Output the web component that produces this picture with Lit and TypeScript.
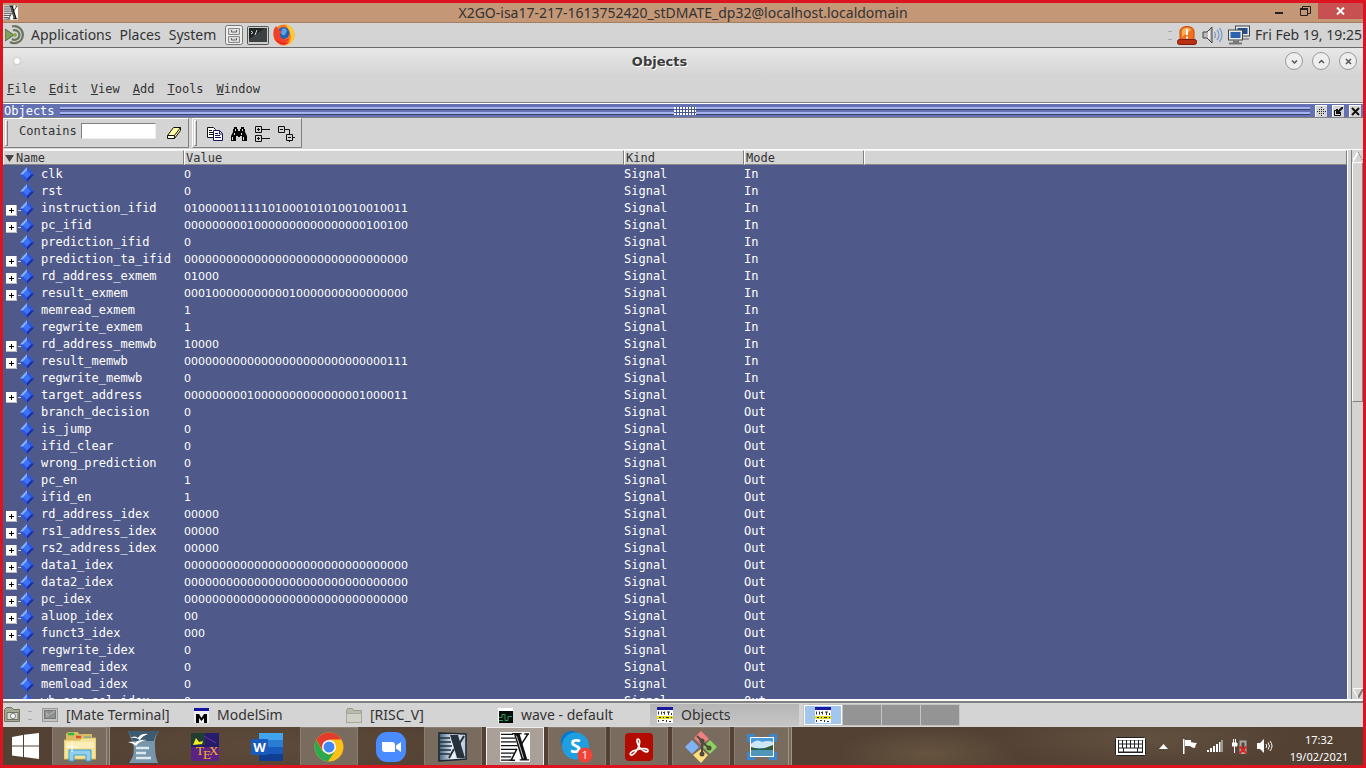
import { LitElement, html, css, svg, TemplateResult } from "lit";
import { customElement, state } from "lit/decorators.js";

type Row = [name: string, value: string, mode: string, expandable?: boolean];

const ROWS: Row[] = [
  ["clk", "0", "In"],
  ["rst", "0", "In"],
  ["instruction_ifid", "01000001111101000101010010010011", "In", true],
  ["pc_ifid", "00000000010000000000000000100100", "In", true],
  ["prediction_ifid", "0", "In"],
  ["prediction_ta_ifid", "00000000000000000000000000000000", "In", true],
  ["rd_address_exmem", "01000", "In", true],
  ["result_exmem", "00010000000000010000000000000000", "In", true],
  ["memread_exmem", "1", "In"],
  ["regwrite_exmem", "1", "In"],
  ["rd_address_memwb", "10000", "In", true],
  ["result_memwb", "00000000000000000000000000000111", "In", true],
  ["regwrite_memwb", "0", "In"],
  ["target_address", "00000000010000000000000001000011", "Out", true],
  ["branch_decision", "0", "Out"],
  ["is_jump", "0", "Out"],
  ["ifid_clear", "0", "Out"],
  ["wrong_prediction", "0", "Out"],
  ["pc_en", "1", "Out"],
  ["ifid_en", "1", "Out"],
  ["rd_address_idex", "00000", "Out", true],
  ["rs1_address_idex", "00000", "Out", true],
  ["rs2_address_idex", "00000", "Out", true],
  ["data1_idex", "00000000000000000000000000000000", "Out", true],
  ["data2_idex", "00000000000000000000000000000000", "Out", true],
  ["pc_idex", "00000000000000000000000000000000", "Out", true],
  ["aluop_idex", "00", "Out", true],
  ["funct3_idex", "000", "Out", true],
  ["regwrite_idex", "0", "Out"],
  ["memread_idex", "0", "Out"],
  ["memload_idex", "0", "Out"],
  ["wb_src_sel_idex", "0", "Out"],
];

const icon = (w: number, h: number, box: string, body: unknown): TemplateResult =>
  html`<svg width=${w} height=${h} viewBox=${box} aria-hidden="true">${body}</svg>`;

/* ---- window and panel icons ---- */
const xMark = (w: number, h: number) => icon(w, h, "0 0 32 32", svg`
  <rect width="32" height="32" fill="#fff"/>
  <path d="M1 2.500H14M1 6.500H16M1 10.500H17M1 14.500H19M1 18.500H18M1 22.500H15M1 26.500H12M1 30H11" stroke="#111" stroke-width="1.500"/>
  <path d="M13 1h10v1.500h-2L29 29h2v1.500H21V29h2L15 2.500h-2z" fill="#111"/>
  <path d="M30 2L21.500 15M18 18L12 30M26 2h5M10 30h6" fill="none" stroke="#111" stroke-width="1.600"/>
  <path d="M17.500 4l7.500 24" stroke="#fff" stroke-width=".8"/>`);

const mateLogo = icon(20, 20, "0 0 20 20", svg`
  <path d="M0 4l9 6-9 6z" fill="#7f9f5a" stroke="#56683f"/>
  <path d="M7 1.500a8.500 8.500 0 1 1-2 15.500M8 5.500a4.800 4.800 0 1 1-1 8.500" fill="none" stroke="#68755c" stroke-width="2.200"/>
  <circle cx="10" cy="10" r="2" fill="#87a752"/>`);

const cabinet = icon(18, 20, "0 0 18 20", svg`
  <rect x=".5" y=".5" width="17" height="19" rx="2" fill="#eee" stroke="#777"/>
  <path d="M3.500 3.500h11v6h-11zM3.500 11.500h11v6h-11z" fill="#ddd" stroke="#888"/>
  <path d="M6.500 5v2h5V5M6.500 13v2h5v-2" fill="none" stroke="#666"/>`);

const terminal = icon(22, 19, "0 0 22 19", svg`
  <rect x=".5" y=".5" width="21" height="18" rx="1" fill="#ccc" stroke="#555"/>
  <rect x="2" y="2" width="18" height="14" fill="#1f2425"/>
  <path d="M2 13L18 2h2v14H2z" fill="#3c4243"/>
  <path d="M4 5l2 1.500L4 8M10 4L8 9" fill="none" stroke="#ddd"/>`);

const firefox = icon(22, 22, "0 0 22 22", svg`
  <circle cx="11" cy="11" r="10.500" fill="#ff7a18"/>
  <path d="M13 0c5 2 9 6 8.500 12-1 6-5 9.500-10.500 9.500 7-2 8-9 6-13C16 5 14 4 13 0z" fill="#ffcb2e"/>
  <circle cx="10.500" cy="9" r="6" fill="#245fb4"/>
  <path d="M1 5l2-3 2 3 3 2c1 1 0 2-1 3 0 5 5 7 9 4 0 5-10 8-14 2-2-4-2-7-1-11z" fill="#f0402a"/>
  <path d="M2 12c1 6 9 9 15 5-4 6-13 5-15-5z" fill="#e8222c"/>
  <path d="M9 5q4-2 5 2l-2 4q-3 1-4-2z" fill="#5aa4e4"/>`);

const siren = icon(20, 20, "0 0 20 20", svg`
  <path d="M3 15V6c0-6 14-6 14 0v9z" fill="#f0701c" stroke="#c84c14"/>
  <path d="M5 12V6c1-4 8-4 9-1" fill="#ffb055"/>
  <rect x=".5" y="14.500" width="19" height="5" rx="2" fill="#b92f16" stroke="#7d1c0b"/>
  <path d="M10 4v6M10 11.500v2" stroke="#fff" stroke-width="2"/>`);

const speaker = icon(21, 20, "0 0 21 20", svg`
  <path d="M1 7h4l5-5v16l-5-5H1z" fill="#bbb" stroke="#444"/>
  <path d="M7 6v8" stroke="#eee" stroke-width="2"/>
  <path d="M12.500 7q2 3 0 6M15 5q4 5 0 10M17.500 3q5 7 0 14" fill="none" stroke="#7e9cc8" stroke-width="1.300"/>`);

const network = icon(22, 20, "0 0 22 20", svg`
  <rect x="7.500" y="1" width="14" height="10" fill="#e9e9e9" stroke="#444"/><rect x="9.500" y="3" width="10" height="6" fill="#234f8f"/>
  <path d="M13 14h8" stroke="#999" stroke-width="2"/>
  <rect x=".5" y="5" width="14" height="10" fill="#e9e9e9" stroke="#444"/><rect x="2.500" y="7" width="10" height="6" fill="#2b62ad"/>
  <path d="M6 15v2h4v-2M1 18.500h13" fill="none" stroke="#777" stroke-width="2"/>`);

/* ---- toolbar icons ---- */
const eraser = icon(16, 14, "0 0 16 14", svg`
  <path d="M1.500 9.500l6-8h7v3l-6 8h-7z" fill="#ffffa8" stroke="#111"/>
  <path d="M1.500 9.500h7l6-8M8.500 9.500v3" fill="none" stroke="#111"/><path d="M3 11h4" stroke="#fff" stroke-width="2"/>`);

const copy = icon(16, 14, "0 0 16 14", svg`
  <path d="M.5.500h6l2 2v8h-8z" fill="#fff" stroke="#111"/><path d="M2 3.500h3M2 5.500h5M2 7.500h5" stroke="#111"/>
  <path d="M6.500 3.500h6l3 3v7h-9z" fill="#fff" stroke="#16165f"/><path d="M8 6.500h3M8 8.500h5M8 10.500h6M12.500 4v3h3" fill="none" stroke="#16165f"/>`);

const binoculars = icon(16, 14, "0 0 16 14", svg`
  <path d="M3 0h3v2h1v2h2V2h1V0h3v2h1v3l2 4v5h-5V9H9v1H7V9H5v5H0V9l2-4V2h1z" fill="#050505"/>
  <path d="M4.500 2v2M11.500 2v2M3.500 6v2M10.500 6v2M1.500 10v3M12.500 10v3" stroke="#ddd"/>`);

const expandAll = icon(15, 16, "0 0 15 16", svg`
  <path d="M.5.500h6v6h-6zM.5 9.500h6v6h-6zM7 3.500h8M7 12.500h8M2 3.500h3M3.500 2v3M2 12.500h3M3.500 11v3" fill="none" stroke="#111"/>`);

const collapseTree = icon(17, 16, "0 0 17 16", svg`
  <path d="M.5.500h6v6h-6zM8.500 8.500h6v6h-6zM2 3.500h3M7 3.500h4.500v5M10 11.500h3M15 11.500h2M11.500 15v1" fill="none" stroke="#111"/>`);

const diamond = icon(14, 15, "0 0 14 15", svg`
  <path d="M7 0l7 7.500L7 15 0 7.500z" fill="#2b55df"/><path d="M7 0v7.500H0z" fill="#86b1f5"/>
  <path d="M7 3l4 4.500-4 4-4-4z" fill="#3d73f5"/><path d="M14 7.500L7 15v-3l4-4.500z" fill="#1c2f9c"/>`);

const plus = icon(11, 11, "0 0 11 11", svg`
  <rect width="11" height="11" fill="#fff"/><path d="M0 10.500h10.500V0" fill="none" stroke="#bbb"/>
  <path d="M3 5.500h5M5.500 3v5" stroke="#000"/>`);

/* ---- session panel icons ---- */
const desk = icon(17, 16, "0 0 17 16", svg`
  <path d="M.5 2.500l2-2h5l2 2h6v12h-15z" fill="#a4a894" stroke="#6e7262"/><path d="M3 5.500h11v7H3z" fill="#d8dbcc" stroke="#6e7262"/><circle cx="9" cy="9" r="2.500" fill="#fff" stroke="#777"/>`);
const smallTerm = icon(16, 14, "0 0 16 14", svg`
  <rect x=".5" y=".5" width="15" height="13" fill="#c4c4c4" stroke="#999"/><rect x="2.500" y="2.500" width="11" height="8" fill="#8e9191" stroke="#777"/><path d="M4 5l2 1-2 1M4 9l9-6" fill="none" stroke="#b7b7b7"/>`);
const modelsim = icon(15, 15, "0 0 15 15", svg`
  <rect width="15" height="15" fill="#eee"/><path d="M0 1.500h15" stroke="#1414a0" stroke-width="3"/><path d="M2 15V6h3l2.500 4L10 6h3v9h-3v-5l-2.500 3L5 10v5z" fill="#000"/>`);
const folder = icon(16, 15, "0 0 16 15", svg`
  <path d="M.5 3l1-2.500h5l1 2H15.500v12H.5z" fill="#b9bbb0" stroke="#989a90"/><path d="M.5 5.500h15v9H.5z" fill="#cfd1c6" stroke="#a6a89e"/>`);
const wave = icon(15, 15, "0 0 15 15", svg`
  <rect width="15" height="15" fill="#fff"/><rect x="1" y="3" width="14" height="12" fill="#050d0a"/><path d="M1 9.500h3v-3h3v6h3v-4h4M1 12.500h4" fill="none" stroke="#2f9c62"/>`);
const objectsIcon = icon(16, 16, "0 0 16 16", svg`
  <rect width="16" height="16" fill="#fff"/><path d="M0 1.500h16" stroke="#1a1aa0" stroke-width="3"/>
  <path d="M0 9h16v3H0z" fill="#e4e020"/>
  <path d="M1.500 4.500v3M4.500 4.500v3M7.500 4.500v3M6 5.500h1M10 5h3M11.500 5v3M14.500 6v2M2 10.500h2M6 10.500h1M9 10.500h3M14 10.500h1M1.500 13v2M5 13.500h2M9.500 13v2M12 14.500h2" fill="none" stroke="#333"/>`);

/* ---- host taskbar icons ---- */
const winLogo = icon(27, 26, "0 0 27 26", svg`<path d="M0 4l11-2v10.500H0zM12 1.800L27 0v12.500H12zM0 13.500h11V24L0 22.500zM12 13.500h15V26l-15-2z" fill="#fff"/>`);
const explorer = icon(32, 30, "0 0 32 30", svg`
  <path d="M2 2l2-2h10l1 2h13v22H2z" fill="#d8bd63"/><path d="M4 2h6" stroke="#2fb344" stroke-width="2.500"/><path d="M12 5h5" stroke="#e1482b" stroke-width="2.500"/><path d="M20 6h7" stroke="#2e8fe0" stroke-width="2.500"/>
  <path d="M0 8h16l2-2h14v21H0z" fill="#f6e39a" stroke="#d8ba58"/><path d="M2 10h28v6H2z" fill="#fbeeb8"/>
  <path d="M5 29V18h22v11h-5v-6H10v6z" fill="#8fd0ee" stroke="#3f9bcc"/><path d="M8 9v11M2.500 15h11" stroke="#fff"/>`);
const office = icon(32, 32, "0 0 32 32", svg`
  <path d="M1 0h31q-5 6-4 16 0 9 3 16H2q7-9 4-20z" fill="#7896ab"/><path d="M1 0h31q-5 6-5 10H6z" fill="#3c5a70"/>
  <path d="M3 7q5-3 8 0 3-5 10-4-6 2-8 6-4-3-10-2zM1 11q5-1 7 1 4-4 12-3-8 1-11 6-3-3-8-4z" fill="#fff"/>
  <path d="M9 17h13M9 22h10M9 27h15" stroke="#dce7ee" stroke-width="2.500"/>`);
const tex = icon(28, 28, "0 0 28 28", svg`
  <rect width="28" height="28" fill="#271c6b"/><path d="M0 14h28v14H0z" fill="#5a2384"/><path d="M0 0h14v12H0z" fill="#213d33"/><path d="M5 5l3 4 4-1-1 3-9 1z" fill="#f2ee28"/><path d="M13 3l12 7" stroke="#6a34a4"/>
  <text x="5" y="22" font-size="13" font-family="Liberation Serif, serif" fill="#f4b623">T</text><text x="12" y="26" font-size="13" font-family="Liberation Serif, serif" fill="#f4b623">E</text><text x="18" y="22" font-size="13" font-family="Liberation Serif, serif" fill="#f4b623">X</text>`);
const word = icon(32, 28, "0 0 32 28", svg`
  <path d="M8 0h24v7H8z" fill="#41a5ee"/><path d="M8 7h24v7H8z" fill="#2b7cd3"/><path d="M8 14h24v7H8z" fill="#185abd"/><path d="M8 21h24v7H8z" fill="#103f91"/>
  <rect y="6" width="17" height="16" rx="1" fill="#185abd"/><text x="8.500" y="19" text-anchor="middle" font-size="13" font-weight="700" font-family="Open Sans, sans-serif" fill="#fff">W</text>`);
const chrome = icon(30, 30, "0 0 30 30", svg`
  <circle cx="15" cy="15" r="14.500" fill="#fbc116"/>
  <path d="M2.440 7.750A14.500 14.500 0 0 0 14 29.500l7-10.500-6 4-7-4.500z" fill="#2da94f"/>
  <path d="M15 7.500h12.400A14.500 14.500 0 0 0 2.440 7.750L8.500 18.500z" fill="#e33b2e"/>
  <circle cx="15" cy="15" r="7" fill="#fff"/><circle cx="15" cy="15" r="5.500" fill="#4285f4"/>`);
const zoom = icon(30, 30, "0 0 30 30", svg`
  <rect width="30" height="30" rx="11" fill="#4a8cff"/><path d="M6 10h10q3 0 3 3v7H9q-3 0-3-3zM20 13.500l5-3.500v10l-5-3.500z" fill="#fff"/>`);
const x11 = icon(30, 30, "0 0 30 30", svg`
  <defs><linearGradient id="xg"><stop stop-color="#3f607f"/><stop offset=".5" stop-color="#eef4fa"/><stop offset="1" stop-color="#b5c8da"/></linearGradient></defs>
  <path d="M1 1l27 1v25L1 29z" fill="url(#xg)" stroke="#1c2630" stroke-width="1.500"/><path d="M2 6h10M2 10h11M2 14h12M2 18h11M2 22h10" stroke="#222f3c" stroke-width="1.500"/>
  <path d="M12 3h8l7 23h-8z" fill="#27323c"/><path d="M26 4l-6 10M16 17l-5 9" stroke="#27323c" stroke-width="2"/>`);
const skype = icon(32, 32, "0 0 32 32", svg`
  <circle cx="10" cy="10" r="10" fill="#0078d4"/><circle cx="19" cy="18" r="9" fill="#0a8ad0"/><circle cx="14.500" cy="15" r="13.500" fill="#1f9fe0"/>
  <text x="14.500" y="22" text-anchor="middle" font-size="20" font-weight="700" font-family="Open Sans, sans-serif" fill="#fff">S</text>
  <circle cx="24" cy="24" r="7.500" fill="#f34336"/><text x="24" y="28" text-anchor="middle" font-size="11" font-family="Open Sans, sans-serif" fill="#fff">1</text>`);
const acrobat = icon(28, 28, "0 0 28 28", svg`
  <rect width="28" height="28" rx="4" fill="#b30b00"/>
  <path d="M13 6c-2 0-1 5 2 9 3 3 7 5 8 3 1-3-7-3-12-1-5 1-7 4-5 5 2 1 6-4 8-9 1-4 1-7-1-7z" fill="none" stroke="#fff" stroke-width="1.700"/>`);
const git = icon(32, 32, "0 0 32 32", svg`
  <path d="M16 0l8 8-8 6-7-7z" fill="#f08080"/><path d="M25 9l7 7-7 7-7-7z" fill="#8bd35f"/><path d="M16 18l7 6-7 8-8-8z" fill="#fde07a"/><path d="M7 9l7 7-7 7-7-7z" fill="#80b2f5"/>
  <path d="M12 5l5 5v14M17 11l7 6" fill="none" stroke="#51483f" stroke-width="2"/><circle cx="17" cy="10" r="2.500" fill="#51483f"/><circle cx="24" cy="17" r="2.500" fill="#51483f"/><circle cx="17" cy="23" r="2.500" fill="#51483f"/>`);
const photos = icon(30, 26, "0 0 30 26", svg`
  <path d="M1.500 8V1.500H8M22 1.500h6.500V8M28.500 18v6.500H22M8 24.500H1.500V18" fill="none" stroke="#3a87cf" stroke-width="3"/>
  <rect x="3" y="3" width="24" height="20" fill="#fff"/><rect x="4" y="4" width="22" height="18" fill="#4a9bdc"/><path d="M4 10q6-6 11-2 6-2 11 0v6H4z" fill="#cfe6f6"/><path d="M4 13l8 2 6-1 8-3v5H4z" fill="#2f5c3a"/><path d="M4 16h22v6H4z" fill="#4f96b8"/>`);

/* ---- tray icons ---- */
const keyboard = icon(31, 19, "0 0 31 19", svg`
  <rect x=".5" y=".5" width="30" height="18" rx="1" fill="#fff" stroke="#222"/><rect x="3" y="3" width="25" height="13" fill="#222"/>
  <path d="M4 5h23M4 9h23M4 13h4M9 13h13M23 13h4" stroke="#fff" stroke-width="3"/><path d="M7.500 3v8M11.500 3v8M15.500 3v8M19.500 3v8M23.500 3v8" stroke="#222"/>`);
const up = icon(9, 5, "0 0 9 5", svg`<path d="M0 5l4.500-5L9 5z" fill="#fff"/>`);
const flag = icon(16, 15, "0 0 16 15", svg`<path d="M1 0h1.500v15H1z" fill="#fff"/><path d="M3 1h6v2q3 1 6 1-2 2-2 5-3 0-5-2H3z" fill="#fff"/>`);
const bars = icon(16, 12, "0 0 16 12", svg`<path d="M0 10h2v2H0zM3 8h2v4H3zM6 6h2v6H6zM9 4h2v8H9z" fill="#fff"/><path d="M12 2h1.500v10H12z" fill="#fff"/><path d="M14 0h2v12h-2z" fill="#999"/>`);
const power = icon(16, 15, "0 0 16 15", svg`
  <path d="M1.500 0v4M3.500 0v4M0 4h5v3H0zM2.500 7v7" fill="#fff" stroke="#fff"/><path d="M8.500 14V2.500h5V14z" fill="none" stroke="#aaa" stroke-width="2"/><path d="M7.500 7.500l7 7M14.500 7.500l-7 7" stroke="#e02424" stroke-width="2"/>`);
const volume = icon(16, 14, "0 0 16 14", svg`<path d="M0 4h3l4-4v14l-4-4H0z" fill="#fff"/><path d="M9 5q1.500 2 0 4M11 3.500q3 3.500 0 7M13 2q4 5 0 10" fill="none" stroke="#fff"/>`);

@customElement("signal-table")
class SignalTable extends LitElement {
  static styles = css`
    :host { display: block; min-height: 0; overflow: hidden; background: #505a8a; }
    .grid { width: 100%; border-collapse: separate; border-spacing: 0; table-layout: fixed; color: #fff; }
    .name { width: 181px; }
    .value { width: 440px; }
    .short { width: 120px; }
    th { box-sizing: border-box; height: 15px; padding: 1px 0 0 1px; border-top: 1px solid #f4f4f4; border-left: 1px solid #fff; border-right: 1px solid #808080; border-bottom: 1px solid #858585; background: #d4d4d4; color: #333; text-align: left; font-weight: 400; line-height: 12px; }
    th .lead { display: flex; align-items: center; gap: 2px; }
    td { box-sizing: border-box; height: 17px; padding: 2px 0 0; line-height: 15px; white-space: pre; overflow: hidden; }
    .digits { font: 11px/15px "DejaVu Sans", sans-serif; }
    .cell { display: flex; align-items: center; height: 15px; padding-left: 3px; }
    .toggle { display: flex; align-items: center; gap: 1px; width: 14px; height: 15px; padding: 3px 0 0; box-sizing: border-box; border: 0; background: none; }
    .toggle::after { content: ""; border-top: 1px dotted #c8cce0; width: 2px; }
    .label { padding-left: 7px; }
    svg { display: block; flex: none; }
  `;
  render() {
    return html`<table class="grid">
      <colgroup><col class="name" /><col class="value" /><col class="short" /><col class="short" /><col /></colgroup>
      <thead><tr>
        <th scope="col"><span class="lead">${icon(9, 7, "0 0 9 7", svg`<path d="M0 0h9L4.500 7z" fill="#444"/>`)}Name</span></th>
        <th scope="col">Value</th><th scope="col">Kind</th><th scope="col">Mode</th><th></th>
      </tr></thead>
      <tbody>${ROWS.map(([name, value, mode, expandable]) => html`<tr>
        <td><span class="cell">
          ${expandable
            ? html`<button class="toggle" aria-label="Expand ${name}">${plus}</button>`
            : html`<svg width="14" height="11" aria-hidden="true"></svg>`}
          ${diamond}<span class="label">${name}</span></span></td>
        <td class="digits">${value}</td><td>Signal</td><td>${mode}</td><td></td>
      </tr>`)}</tbody>
    </table>`;
  }
}

@customElement("app-root")
class AppRoot extends LitElement {
  @state() private filter = "";

  static styles = css`
    :host { display: flex; flex-direction: column; box-sizing: border-box; height: 100vh; overflow: hidden; border: 3px solid #db1420; background: #d4d4d4; color: #333; font: 12px/14px "DejaVu Sans Mono", monospace; }
    * { box-sizing: border-box; }
    svg { display: block; flex: none; }
    button { display: flex; align-items: center; justify-content: center; padding: 0; border: 0; background: none; color: inherit; font: inherit; white-space: nowrap; }
    .frame { display: flex; align-items: center; height: 20px; flex: none; background: #c49777; border-bottom: 1px solid #a57f62; }
    .frame h1 { flex: 1; margin: 0; padding-left: 82px; text-align: center; font: 14px/18px "Noto Sans", sans-serif; color: #333; }
    .ctl { width: 26px; height: 16px; align-self: flex-start; }
    .ctl.close { width: 45px; background: #c75050; }
    .panel { display: flex; align-items: center; flex: none; height: 25px; padding: 0 1px 0 2px; border-bottom: 1px solid #6b6b6b; font: 14px/20px "Noto Sans", sans-serif; }
    .panel nav { display: flex; gap: 8px; padding: 0 9px 0 6px; }
    .panel .launch { display: flex; gap: 4px; }
    .push { flex: 1; }
    .grip { width: 4px; height: 9px; border: solid #aaa; border-width: 1px 0; }
    .status { display: flex; align-items: center; gap: 5px; }
    .caption { display: flex; align-items: center; flex: none; height: 28px; padding: 0 6px 2px 11px; background: linear-gradient(#e8e8e8, #d4d4d4); }
    .dot { width: 6px; height: 6px; border-radius: 50%; background: #fff; box-shadow: 0 0 2px #999; }
    .caption h2 { flex: 1; margin: 0; padding: 2px 0 0 14px; text-align: center; font: 700 13px/18px "DejaVu Sans", sans-serif; color: #3b3b3b; text-shadow: 1px 1px #fff; }
    .rounds { display: flex; gap: 9px; }
    .round { width: 18px; height: 18px; border: 1px solid #999; border-radius: 50%; background: #eee; }
    .menus { display: flex; gap: 13px; flex: none; height: 27px; padding: 0 4px; border-bottom: 1px solid #808080; }
    .menus u { text-underline-offset: 1px; }
    .dock { display: flex; align-items: center; flex: none; height: 15px; gap: 5px; padding: 0 2px 0 1px; border-top: 1px solid #fff; border-bottom: 1px solid #808080; background: #6472b4; color: #fff; }
    .rails { flex: 1; height: 8px; background: linear-gradient(#a6b2f0 0 2px, #3a4270 2px 3px, #6472b4 3px 5px, #a6b2f0 5px 7px, #3a4270 7px); display: flex; justify-content: center; }
    .knurl { width: 22px; height: 8px; background: radial-gradient(circle at 1px 1px, #fff 0 1px, transparent 1px) 0 0 / 3px 3px, #4a5690; }
    .dock .minis { display: flex; gap: 5px; }
    .mini { width: 12px; height: 12px; background: #d4d4d4; border: solid #fff; border-width: 1px 0 0 1px; }
    .tools { display: flex; gap: 3px; flex: none; height: 31px; padding-bottom: 1px; }
    .group { display: flex; align-items: center; border: 1px solid; border-color: #fff #808080 #808080 #fff; padding-right: 6px; }
    .handle { width: 3px; height: 26px; margin-left: 1px; border: 1px solid; border-color: #fff #808080 #808080 #fff; }
    .find { gap: 4px; padding-left: 11px; display: flex; align-items: flex-start; height: 20px; }
    .find input { width: 75px; height: 16px; margin: 0; padding: 0 2px; border: 1px solid; border-color: #808080 #eee #eee #808080; background: #fff; font: inherit; outline: 0; }
    .find label { line-height: 17px; }
    .find button { margin: 3px 0 0 6px; }
    .actions { display: flex; gap: 8px; padding: 2px 0 0 10px; }
    .body { display: flex; flex: 1; min-height: 0; border-top: 1px solid #fff; border-bottom: 2px solid #fff; }
    signal-table { flex: 1; border-right: 1px solid #fff; }
    .scroll { display: flex; flex-direction: column; width: 12px; margin-left: 3px; border-left: 1px solid #808080; background: #d4d4d4; }
    .thumb { height: 240px; border: 1px solid; border-color: #fff #808080 #808080 #fff; }
    .arrow { height: 12px; }
    .session { display: flex; align-items: center; flex: none; height: 26px; padding-left: 1px; border-top: 2px solid #808080; font: 14px/20px "Noto Sans", sans-serif; }
    .session .grip { margin: 0 10px 0 7px; }
    .win { flex: 0 1 152px; justify-content: flex-start; gap: 8px; height: 22px; }
    .win.on { flex-basis: 149px; padding-left: 7px; background: linear-gradient(#b6b6b6, #c6c6c6); }
    .pager { display: flex; gap: 1px; margin-left: 4px; padding: 1px; background: #c4c4c4; }
    .desk { width: 38px; height: 20px; background: #949494; }
    .desk.on { background: #a2c6ee; border: 1px solid #fff; }
    .taskbar { display: flex; flex: none; align-items: stretch; height: 38px; background: radial-gradient(ellipse 90px 26px at 68% 70%, #66543f, transparent), radial-gradient(ellipse 150px 30px at 84% 30%, #62503f, transparent), radial-gradient(ellipse 200px 30px at 20% 50%, #5e4a3a, transparent), #534234; }
    .start { width: 46px; padding-right: 2px; }
    .apps { display: flex; gap: 4px; padding-left: 3px; }
    .app { width: 58px; border: 1px solid transparent; border-bottom: 0; }
    .app.open { border-color: #8b7e70; background: #796b5d; }
    .app.now { border-color: #eee; background: #aaa097; }
    .app.stack { border-right: 4px double #a09384; }
    .tray { display: flex; align-items: center; gap: 9px; padding-right: 7px; }
    .tray .key { margin-right: 4px; }
    .tray .chev { margin-right: 5px; }
    .clock { width: 74px; padding: 4px 0 0; text-align: center; color: #fff; font: 11px/17px "Noto Sans", sans-serif; }
  `;

  render() {
    const menus = ["File", "Edit", "View", "Add", "Tools", "Window"];
    const glyph = (d: string) => icon(11, 11, "0 0 11 11", svg`<path d=${d} fill="none" stroke="#555" stroke-width="1.500"/>`);
    return html`
      <header class="frame">
        ${xMark(15, 15)}
        <h1>X2GO-isa17-217-1613752420_stDMATE_dp32@localhost.localdomain</h1>
        <button class="ctl" aria-label="Minimize">${icon(9, 10, "0 0 9 10", svg`<path d="M0 7h8" stroke="#222" stroke-width="2"/>`)}</button>
        <button class="ctl" aria-label="Restore">${icon(11, 10, "0 0 11 10", svg`<path d="M.5 2.500h7v7h-7zM2.500 2V.500h8v7H8" fill="none" stroke="#222"/><path d="M0 3h8" stroke="#222" stroke-width="2"/>`)}</button>
        <button class="ctl close" aria-label="Close">${icon(9, 8, "0 0 9 8", svg`<path d="M1 .5l7 7M8 .5l-7 7" stroke="#fff" stroke-width="2"/>`)}</button>
      </header>
      <div class="panel">
        ${mateLogo}
        <nav><button>Applications</button><button>Places</button><button>System</button></nav>
        <div class="launch"><button aria-label="Files">${cabinet}</button><button aria-label="Terminal">${terminal}</button><button aria-label="Firefox">${firefox}</button></div>
        <div class="push"></div>
        <div class="status"><span class="grip"></span>${siren}${speaker}${network}<time>Fri Feb 19, 19:25</time></div>
      </div>
      <div class="caption">
        <span class="dot"></span><h2>Objects</h2>
        <div class="rounds">
          <button class="round" aria-label="Lower">${glyph("M3 4.500l2.500 2.500L8 4.500")}</button>
          <button class="round" aria-label="Raise">${glyph("M3 7l2.500-2.500L8 7")}</button>
          <button class="round" aria-label="Close">${glyph("M3 3l5 5M8 3L3 8")}</button>
        </div>
      </div>
      <nav class="menus">${menus.map((m) => html`<button><span><u>${m[0]}</u>${m.slice(1)}</span></button>`)}</nav>
      <div class="dock">
        <span>Objects</span><div class="rails"><span class="knurl"></span></div>
        <div class="minis">
          <button class="mini" aria-label="Move">${icon(9, 9, "0 0 9 9", svg`<path d="M4.500 0v9M0 4.500h9M2 2.500h1M6 2.500h1M2 6.500h1M6 6.500h1" stroke="#222" stroke-dasharray="1 1"/>`)}</button>
          <button class="mini" aria-label="Undock">${icon(9, 9, "0 0 9 9", svg`<path d="M9 0L4 5M3 2v4h4" fill="none" stroke="#111" stroke-width="2"/><path d="M3 3.500H.5v5h6V7" fill="none" stroke="#111"/>`)}</button>
          <button class="mini" aria-label="Close pane">${icon(9, 9, "0 0 9 9", svg`<path d="M1 1l7 7M8 1L1 8" stroke="#111" stroke-width="2"/>`)}</button>
        </div>
      </div>
      <div class="tools">
        <div class="group"><span class="handle"></span>
          <div class="find"><label for="contains">Contains</label>
            <input id="contains" .value=${this.filter} @input=${(e: Event) => (this.filter = (e.target as HTMLInputElement).value)} />
            <button aria-label="Clear filter" @click=${() => (this.filter = "")}>${eraser}</button></div>
        </div>
        <div class="group"><span class="handle"></span>
          <div class="actions"><button aria-label="Copy">${copy}</button><button aria-label="Find">${binoculars}</button><button aria-label="Expand all">${expandAll}</button><button aria-label="Collapse all">${collapseTree}</button></div>
        </div>
      </div>
      <main class="body">
        <signal-table></signal-table>
        <div class="scroll">
          <button class="arrow" aria-label="Scroll up">${icon(10, 11, "0 0 10 11", svg`<path d="M0 10L5 1" stroke="#fff" stroke-width="2"/><path d="M5 1l5 9" stroke="#666" stroke-dasharray="1 1"/>`)}</button>
          <div class="thumb"></div><div class="push"></div>
          <button class="arrow" aria-label="Scroll down">${icon(10, 11, "0 0 10 11", svg`<path d="M10 1L5 10" stroke="#777" stroke-width="2"/><path d="M0 1l5 9M0 .5h10" stroke="#fff"/>`)}</button>
        </div>
      </main>
      <div class="session">
        ${desk}<span class="grip"></span>
        <button class="win">${smallTerm}[Mate Terminal]</button>
        <button class="win">${modelsim}ModelSim</button>
        <button class="win">${folder}[RISC_V]</button>
        <button class="win">${wave}wave - default</button>
        <button class="win on">${objectsIcon}Objects</button>
        <div class="pager"><button class="desk on" aria-label="Workspace 1">${objectsIcon}</button>${[2, 3, 4].map((n) => html`<button class="desk" aria-label="Workspace ${n}"></button>`)}</div>
      </div>
      <footer class="taskbar">
        <button class="start" aria-label="Start">${winLogo}</button>
        <div class="apps">
          <button class="app open stack" aria-label="File Explorer">${explorer}</button>
          <button class="app" aria-label="OpenOffice">${office}</button>
          <button class="app" aria-label="TeX">${tex}</button>
          <button class="app" aria-label="Word">${word}</button>
          <button class="app open" aria-label="Chrome">${chrome}</button>
          <button class="app" aria-label="Zoom">${zoom}</button>
          <button class="app open" aria-label="X server">${x11}</button>
          <button class="app open now" aria-label="X2Go">${xMark(30, 30)}</button>
          <button class="app open" aria-label="Skype">${skype}</button>
          <button class="app open" aria-label="Acrobat">${acrobat}</button>
          <button class="app open" aria-label="Git">${git}</button>
          <button class="app open stack" aria-label="Photos">${photos}</button>
        </div>
        <div class="push"></div>
        <div class="tray"><span class="key">${keyboard}</span><span class="chev">${up}</span>${flag}${bars}${power}${volume}
          <div class="clock"><div>17:32</div><div>19/02/2021</div></div></div>
      </footer>`;
  }
}
